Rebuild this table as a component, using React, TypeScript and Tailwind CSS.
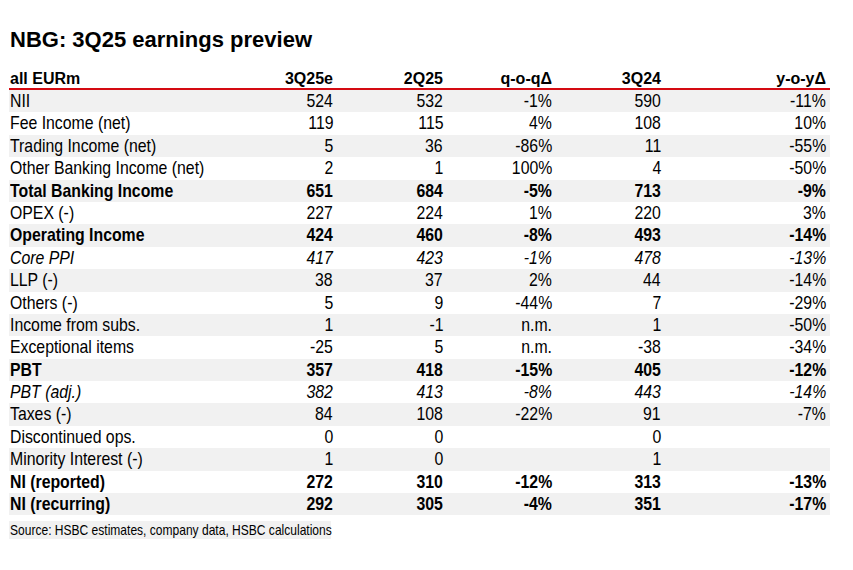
import React from "react";

type Row = {
  label: string;
  vals: string[];
  style?: "bold" | "italic";
};

const rows: Row[] = [
  { label: "NII", vals: ["524", "532", "-1%", "590", "-11%"] },
  { label: "Fee Income (net)", vals: ["119", "115", "4%", "108", "10%"] },
  { label: "Trading Income (net)", vals: ["5", "36", "-86%", "11", "-55%"] },
  { label: "Other Banking Income (net)", vals: ["2", "1", "100%", "4", "-50%"] },
  { label: "Total Banking Income", vals: ["651", "684", "-5%", "713", "-9%"], style: "bold" },
  { label: "OPEX (-)", vals: ["227", "224", "1%", "220", "3%"] },
  { label: "Operating Income", vals: ["424", "460", "-8%", "493", "-14%"], style: "bold" },
  { label: "Core PPI", vals: ["417", "423", "-1%", "478", "-13%"], style: "italic" },
  { label: "LLP (-)", vals: ["38", "37", "2%", "44", "-14%"] },
  { label: "Others (-)", vals: ["5", "9", "-44%", "7", "-29%"] },
  { label: "Income from subs.", vals: ["1", "-1", "n.m.", "1", "-50%"] },
  { label: "Exceptional items", vals: ["-25", "5", "n.m.", "-38", "-34%"] },
  { label: "PBT", vals: ["357", "418", "-15%", "405", "-12%"], style: "bold" },
  { label: "PBT (adj.)", vals: ["382", "413", "-8%", "443", "-14%"], style: "italic" },
  { label: "Taxes (-)", vals: ["84", "108", "-22%", "91", "-7%"] },
  { label: "Discontinued ops.", vals: ["0", "0", "", "0", ""] },
  { label: "Minority Interest (-)", vals: ["1", "0", "", "1", ""] },
  { label: "NI (reported)", vals: ["272", "310", "-12%", "313", "-13%"], style: "bold" },
  { label: "NI (recurring)", vals: ["292", "305", "-4%", "351", "-17%"], style: "bold" },
];

const headers = ["3Q25e", "2Q25", "q-o-q\u0394", "3Q24", "y-o-y\u0394"];

// Arial-like face, squeezed to the narrow width of the source table
const grid = "grid grid-cols-[224px_100px_110px_109px_109px_169px]";
const sans = "font-['Liberation_Sans',Arial,sans-serif]";

export default function App() {
  return (
    <div className={`w-[853px] h-[570px] bg-white text-black overflow-hidden pl-[9px] ${sans}`}>
      <h1 className="mt-[29px] pl-px text-[22px] leading-[22px] font-bold">
        NBG: 3Q25 earnings preview
      </h1>

      <div className="w-[821px] mt-[19px]">
        {/* header */}
        <div className={`${grid} h-[18px] text-[16px] leading-[18px] font-bold border-b-2 border-[#d40a12] box-content`}>
          <div className="pl-px">all EURm</div>
          {headers.map((h, i) => (
            <div key={h} className={`text-right ${i === 4 ? "pr-[4px]" : ""}`}>
              {h}
            </div>
          ))}
        </div>

        {/* body */}
        {rows.map((r, idx) => (
          <div
            key={r.label}
            className={`${grid} h-[22.4px] text-[18.5px] leading-[22.4px] ${idx % 2 === 0 ? "bg-[#f1f1f1]" : "bg-white"} ${
              r.style === "bold" ? "font-bold" : r.style === "italic" ? "italic" : ""
            }`}
          >
            <div className="pl-px whitespace-nowrap">
              <span className="inline-block origin-left scale-x-[0.855]">{r.label}</span>
            </div>
            {r.vals.map((v, i) => (
              <div key={i} className={`text-right whitespace-nowrap ${i === 4 ? "pr-[4px]" : ""}`}>
                <span className="inline-block origin-right scale-x-[0.855]">{v}</span>
              </div>
            ))}
          </div>
        ))}
      </div>

      <div className="mt-[6px] w-[322px] h-[18px] bg-[#f1f1f1] pl-px text-[14.5px] leading-[18px] whitespace-nowrap">
        <span className="inline-block origin-left scale-x-[0.83]">
          Source: HSBC estimates, company data, HSBC calculations
        </span>
      </div>
    </div>
  );
}
